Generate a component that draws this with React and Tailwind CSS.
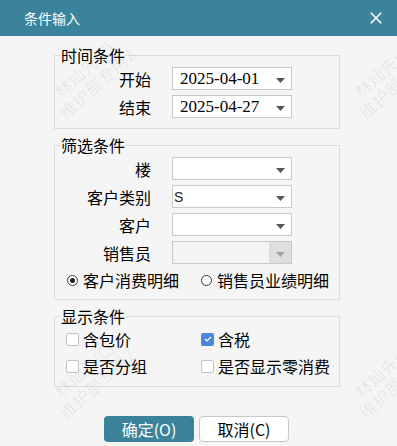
import React from "react";

const cjk = "font-['Noto_Sans_CJK_SC',sans-serif]";

function Arrow({ disabled }) {
  return (
    <svg width="9" height="5" viewBox="0 0 9 5" className="mt-[4px]">
      <polygon points="0,0 9,0 4.5,5" fill={disabled ? "#9aa59c" : "#4f5b52"} />
    </svg>
  );
}

function Select({ value, kind, disabled }) {
  let valueCls = "";
  if (kind === "date") valueCls = "pl-[7px] font-['Liberation_Serif',serif] text-[17px] text-black";
  if (kind === "s") valueCls = "pl-[1px] font-['Liberation_Sans',sans-serif] text-[14px] text-[#222]";
  return (
    <div
      className={`flex h-[23px] w-[120px] border border-[#c9c9c9] ${
        disabled ? "bg-[#f4f4f4]" : "bg-white"
      }`}
    >
      <div className={`flex flex-1 items-center leading-none ${valueCls}`}>{value}</div>
      <div
        className={`flex w-[22px] items-center justify-center ${
          disabled ? "bg-[#dedede]" : ""
        }`}
      >
        <Arrow disabled={disabled} />
      </div>
    </div>
  );
}

function Row({ label, children }) {
  return (
    <div className="flex h-[23px] items-center">
      <div className="w-[96px] text-right text-[16px] leading-[20px]">{label}</div>
      <div className="ml-[21px]">{children}</div>
    </div>
  );
}

function Radio({ checked, label }) {
  return (
    <div className="flex h-[20px] items-center">
      <span className="flex h-[11px] w-[11px] items-center justify-center rounded-full border border-[#3a3a3a] bg-white">
        {checked && <span className="h-[5px] w-[5px] rounded-full bg-[#222]" />}
      </span>
      <span className="ml-[5px] text-[16px] leading-[20px]">{label}</span>
    </div>
  );
}

function Check({ checked, label }) {
  return (
    <div className="flex h-[20px] items-center">
      {checked ? (
        <span className="flex h-[13px] w-[13px] items-center justify-center rounded-[2px] bg-[#4a86da]">
          <svg width="8" height="6" viewBox="0 0 8 6">
            <polyline points="1,3 3,5 7,1" fill="none" stroke="white" strokeWidth="1.2" />
          </svg>
        </span>
      ) : (
        <span className="h-[13px] w-[13px] rounded-[2px] border border-[#c3c3c3] bg-white" />
      )}
      <span className="ml-[4px] text-[16px] leading-[20px]">{label}</span>
    </div>
  );
}

function Legend({ children }) {
  return <legend className="ml-[5px] px-[1px] text-[16px] leading-[20px]">{children}</legend>;
}

function Watermark({ x, y }) {
  return (
    <div
      className={`pointer-events-none absolute -translate-x-1/2 -translate-y-1/2 -rotate-[42deg] whitespace-nowrap text-center text-[17px] leading-[19px] text-black/[0.07] ${cjk}`}
      style={{ left: x, top: y }}
    >
      <div>林灿先(C)</div>
      <div>维护部专用2</div>
    </div>
  );
}

export default function App() {
  return (
    <div className={`relative h-[446px] w-[397px] overflow-hidden bg-[#f5f5f5] text-black ${cjk}`}>
      <div className="flex h-[36px] items-center justify-between bg-[#3a839b] pl-[24px] pr-[15px]">
        <span className="text-[14px] leading-[20px] text-white">条件输入</span>
        <svg width="12" height="12" viewBox="0 0 12 12">
          <path d="M0.8 0.8 L11.2 11.2 M11.2 0.8 L0.8 11.2" stroke="white" strokeWidth="1.6" />
        </svg>
      </div>

      <fieldset className="ml-[54px] mt-[9px] w-[286px] border border-[#dcdcdc] pb-[10px] pt-[2px]">
        <Legend>时间条件</Legend>
        <div className="flex flex-col gap-[5px]">
          <Row label="开始">
            <Select value="2025-04-01" kind="date" />
          </Row>
          <Row label="结束">
            <Select value="2025-04-27" kind="date" />
          </Row>
        </div>
      </fieldset>

      <fieldset className="ml-[54px] mt-[6px] w-[286px] border border-[#dcdcdc] pb-[9px] pt-[2px]">
        <Legend>筛选条件</Legend>
        <div className="flex flex-col gap-[5px]">
          <Row label="楼">
            <Select value="" />
          </Row>
          <Row label="客户类别">
            <Select value="S" kind="s" />
          </Row>
          <Row label="客户">
            <Select value="" />
          </Row>
          <Row label="销售员">
            <Select value="" disabled />
          </Row>
        </div>
        <div className="mt-[6px] grid grid-cols-[134px_1fr] pl-[12px]">
          <Radio checked label="客户消费明细" />
          <Radio label="销售员业绩明细" />
        </div>
      </fieldset>

      <fieldset className="ml-[54px] mt-[6px] w-[286px] border border-[#dcdcdc] pb-[10px] pt-[3px]">
        <Legend>显示条件</Legend>
        <div className="grid grid-cols-[135px_1fr] gap-y-[7px] pl-[11px]">
          <Check label="含包价" />
          <Check checked label="含税" />
          <Check label="是否分组" />
          <Check label="是否显示零消费" />
        </div>
      </fieldset>

      <div className="ml-[104px] mt-[29px] flex gap-[5px]">
        <button className="flex h-[26px] w-[90px] items-center justify-center rounded-[4px] bg-[#3a839b] text-[16px] leading-[20px] text-white">
          确定(O)
        </button>
        <button className="flex h-[26px] w-[90px] items-center justify-center rounded-[4px] border border-[#c8c8c8] bg-white text-[16px] leading-[20px] text-black">
          取消(C)
        </button>
      </div>

      <Watermark x={90} y={76} />
      <Watermark x={390} y={76} />
      <Watermark x={90} y={376} />
      <Watermark x={390} y={376} />
    </div>
  );
}
